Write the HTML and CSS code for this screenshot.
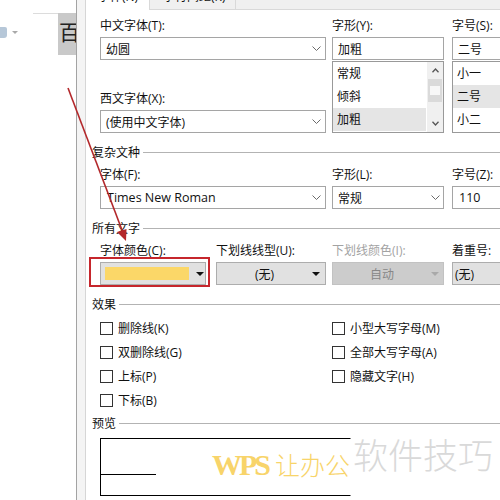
FILE: index.html
```html
<!DOCTYPE html>
<html lang="zh-CN">
<head>
<meta charset="utf-8">
<title>字体</title>
<link rel="stylesheet" href="styles.css">
</head>
<body>
<div class="screen">
  <div class="doc">
    <div class="doc-tools">
      <div class="doc-rule"></div>
      <div class="doc-icons"><span class="doc-icon"></span><span class="doc-caret"></span></div>
    </div>
    <div class="doc-sel">百</div>
  </div>
  <div class="dialog">
    <div class="dialog-edge"></div>
    <div class="panel">
      <div class="tabs">
        <div class="tab tab-on">字体(N)</div>
        <div class="tab">字符间距(R)</div>
      </div>
      <div class="content">
        <div class="row row-a">
          <div class="col c1">
            <div class="label">中文字体(T):</div>
            <div class="input combo"><span>幼圆</span><svg class="chev" width="9" height="5" viewBox="0 0 9 5"><path d="M0.5 0.5 L4.5 4.5 L8.5 0.5" fill="none" stroke="#6a6a6a"/></svg></div>
            <div class="label gap-l">西文字体(X):</div>
            <div class="input combo"><span>(使用中文字体)</span><svg class="chev" width="9" height="5" viewBox="0 0 9 5"><path d="M0.5 0.5 L4.5 4.5 L8.5 0.5" fill="none" stroke="#6a6a6a"/></svg></div>
          </div>
          <div class="col c2">
            <div class="label">字形(Y):</div>
            <div class="input">加粗</div>
            <div class="list">
              <div class="items">
                <div class="item">常规</div>
                <div class="item">倾斜</div>
                <div class="item sel">加粗</div>
              </div>
              <div class="scroll">
                <div class="sarrow"><svg width="7" height="5" viewBox="0 0 7 5"><path d="M0.5 4.2 L3.5 1 L6.5 4.2" fill="none" stroke="#555" stroke-width="1.3"/></svg></div>
                <div class="thumb"><span class="thumb-in"></span></div>
                <div class="sarrow down"><svg width="7" height="5" viewBox="0 0 7 5"><path d="M0.5 0.8 L3.5 4 L6.5 0.8" fill="none" stroke="#555" stroke-width="1.3"/></svg></div>
              </div>
            </div>
          </div>
          <div class="col c3">
            <div class="label">字号(S):</div>
            <div class="input">二号</div>
            <div class="list">
              <div class="items">
                <div class="item">小一</div>
                <div class="item sel">二号</div>
                <div class="item">小二</div>
              </div>
            </div>
          </div>
        </div>

        <div class="section">复杂文种</div>
        <div class="row row-b">
          <div class="col c1">
            <div class="label">字体(F):</div>
            <div class="input combo"><span class="latin">Times New Roman</span><svg class="chev" width="9" height="5" viewBox="0 0 9 5"><path d="M0.5 0.5 L4.5 4.5 L8.5 0.5" fill="none" stroke="#6a6a6a"/></svg></div>
          </div>
          <div class="col c2">
            <div class="label">字形(L):</div>
            <div class="input combo"><span>常规</span><svg class="chev" width="9" height="5" viewBox="0 0 9 5"><path d="M0.5 0.5 L4.5 4.5 L8.5 0.5" fill="none" stroke="#6a6a6a"/></svg></div>
          </div>
          <div class="col c3">
            <div class="label">字号(Z):</div>
            <div class="input"><span class="latin">110</span></div>
          </div>
        </div>

        <div class="section">所有文字</div>
        <div class="row row-c">
          <div class="col d1">
            <div class="label">字体颜色(C):</div>
            <div class="dd dd-color"><span class="swatch"></span><span class="tri"></span></div>
          </div>
          <div class="col d2">
            <div class="label">下划线线型(U):</div>
            <div class="dd"><span class="dd-text">(无)</span><span class="tri"></span></div>
          </div>
          <div class="col d3">
            <div class="label off">下划线颜色(I):</div>
            <div class="dd dd-off"><span class="dd-text">自动</span><span class="tri"></span></div>
          </div>
          <div class="col d4">
            <div class="label">着重号:</div>
            <div class="dd dd-left"><span class="dd-text">(无)</span></div>
          </div>
        </div>

        <div class="section">效果</div>
        <div class="checks">
          <div class="check-col">
            <div class="check"><span class="box"></span>删除线(K)</div>
            <div class="check"><span class="box"></span>双删除线(G)</div>
            <div class="check"><span class="box"></span>上标(P)</div>
            <div class="check"><span class="box"></span>下标(B)</div>
          </div>
          <div class="check-col">
            <div class="check"><span class="box"></span>小型大写字母(M)</div>
            <div class="check"><span class="box"></span>全部大写字母(A)</div>
            <div class="check"><span class="box"></span>隐藏文字(H)</div>
          </div>
        </div>

        <div class="section section-tight">预览</div>
        <div class="preview">
          <div class="pbox">
            <div class="base-mark"></div>
            <div class="ptext"><span class="p-latin">WPS</span><span class="p-cjk">让办公</span></div>
          </div>
          <div class="watermark">软件技巧</div>
        </div>
      </div>
    </div>
  </div>

  <div class="highlight"></div>
  <svg class="arrow" width="500" height="500" viewBox="0 0 500 500">
    <line x1="68" y1="88" x2="123.5" y2="234" stroke="#b3282b" stroke-width="1.6"/>
    <polygon points="126,241 117,232 126.5,229" fill="#b3282b"/>
  </svg>
</div>
</body>
</html>
```
FILE: styles.css
```css
* { box-sizing: border-box; }
html, body { margin: 0; padding: 0; }
body {
  width: 500px;
  height: 500px;
  overflow: hidden;
  background: #fff;
  font-family: "Open Sans", "Noto Sans CJK SC", sans-serif;
  font-size: 12px;
  color: #111;
}
.screen {
  position: relative;
  width: 500px;
  height: 500px;
  display: flex;
  overflow: hidden;
}

/* document behind the dialog */
.doc { width: 76px; flex: none; display: flex; align-items: flex-start; }
.doc-tools { width: 58px; flex: none; }
.doc-rule { margin: 13px 0 0 33px; border-top: 1px solid #dcdcdc; }
.doc-icons { display: flex; align-items: center; margin-top: 13px; height: 11px; }
.doc-icon { width: 7px; height: 11px; background: #b6c7d8; border-radius: 0 2px 3px 0; }
.doc-caret {
  margin-left: 5px;
  width: 0; height: 0;
  border-left: 3px solid transparent;
  border-right: 3px solid transparent;
  border-top: 3px solid #a9a9a9;
}
.doc-sel {
  width: 18px; height: 42px; flex: none;
  margin-top: 13px;
  background: #c9c9c9;
  font-family: "Noto Sans CJK SC", serif;
  font-size: 21px; line-height: 36px;
  color: #222;
  padding-left: 1px;
  overflow: hidden; white-space: nowrap;
}

/* dialog */
.dialog { flex: 1; display: flex; border-left: 1px solid #a3a3a3; min-width: 0; }
.dialog-edge { width: 9px; flex: none; background: #f4f4f4; border-right: 1px solid #d6d6d6; }
.panel { flex: 1; min-width: 0; background: #fff; overflow: hidden; }

.tabs {
  height: 10px;
  background: #f0f0f0;
  border-bottom: 1px solid #d9d9d9;
  display: flex;
  align-items: flex-end;
}
.tab {
  height: 20px; flex: none;
  line-height: 16px;
  padding: 0 0 4px 13px;
  width: 86px;
  border-right: 1px solid #d9d9d9;
  white-space: nowrap;
  overflow: hidden;
}
.tab-on { width: 64px; padding-left: 12px; background: #fff; height: 21px; margin-bottom: -1px; padding-bottom: 5px; }

.content { padding-left: 6px; }
.row { display: flex; padding-left: 8px; }
.col { flex: none; }
.c1 { width: 226px; margin-right: 6px; }
.c2 { width: 112px; margin-right: 8px; }
.c3 { width: 110px; }
.row-a { margin-top: 8px; }
.row-b, .row-c { margin-top: 7px; }

.label { height: 16px; line-height: 16px; white-space: nowrap; }
.label.off { color: #a3a3a3; }
.gap-l { margin-top: 31px; }

.input {
  height: 23px;
  margin-top: 3px;
  border: 1px solid #a5a5a5;
  padding: 0 4px 0 5px;
  display: flex;
  align-items: center;
  white-space: nowrap;
  background: #fff;
}
.combo .chev { margin-left: auto; flex: none; }
.c2 .combo { padding-right: 3px; }
.latin { font-size: 12.5px; padding-left: 1px; }

.list {
  margin-top: 1px;
  height: 72px;
  border: 1px solid #999;
  display: flex;
}
.items { flex: 1; }
.item { height: 23px; line-height: 23px; padding-left: 4px; white-space: nowrap; }
.item.sel { background: #e5e5e5; }
.scroll {
  width: 16px; flex: none;
  margin-left: 1px;
  background: #f0f0f0;
  display: flex; flex-direction: column;
}
.sarrow { height: 17px; display: flex; align-items: center; justify-content: center; }
.sarrow.down { margin-top: auto; }
.thumb {
  height: 23px; margin: 0 1px;
  background: #dadada;
  display: flex; align-items: center; justify-content: center;
}
.thumb-in { width: 10px; height: 9px; background: #f7f7f7; }

/* section headers */
.section {
  display: flex; align-items: center;
  height: 16px; margin-top: 11px;
  white-space: nowrap;
}
.section::after {
  content: "";
  flex: 1;
  margin-left: 3px;
  border-top: 1px solid #b3b3b3;
}
.section-tight { margin-top: 3px; }

/* drop-down buttons */
.d1 { width: 106px; margin-right: 10px; }
.d2 { width: 110px; margin-right: 6px; }
.d3 { width: 112px; margin-right: 8px; }
.d4 { width: 110px; }
.dd {
  height: 23px; margin-top: 3px;
  border: 1px solid #adadad;
  background: #e1e1e1;
  display: flex; align-items: center;
  padding-right: 5px;
}
.dd-text { flex: 1; text-align: center; white-space: nowrap; }
.dd-left .dd-text { text-align: left; padding-left: 2px; }
.tri {
  flex: none; width: 0; height: 0;
  border-left: 4px solid transparent;
  border-right: 4px solid transparent;
  border-top: 4px solid #111;
}
.dd-color { padding-left: 4px; padding-right: 1px; }
.swatch { width: 84px; height: 13px; background: #fbd768; flex: none; margin-right: auto; }
.dd-off { background: #cccccc; border-color: #c2c2c2; color: #878787; padding-right: 4px; }
.dd-off .tri { border-top-color: #a9a9a9; }

/* checkboxes */
.checks { display: flex; padding-left: 8px; margin-top: 4px; }
.check-col { width: 232px; flex: none; }
.check { height: 24px; display: flex; align-items: center; white-space: nowrap; }
.box { width: 13px; height: 13px; border: 1px solid #333; background: #fff; margin-right: 5px; flex: none; }

/* preview */
.preview { display: flex; align-items: flex-start; padding-left: 8px; margin-top: 7px; }
.pbox {
  width: 251px; height: 58px; flex: none;
  background: #fff;
  border-top: 1px solid #000;
  border-bottom: 1px solid #000;
  border-left: 1px solid #000;
  border-right: 1px solid #fff;
  display: flex; align-items: flex-start;
}
.base-mark { width: 55px; height: 36px; flex: none; border-bottom: 1px solid #000; }
.ptext {
  flex: 1;
  min-width: 0;
  overflow: hidden;
  padding: 0 0 0 56px;
  margin-top: 10px;
  white-space: nowrap;
  color: #f8d46a;
  line-height: 30px;
  height: 30px;
}
.p-latin {
  font-family: "Liberation Serif", serif;
  font-weight: bold;
  font-size: 30px;
  letter-spacing: -3px;
  margin-right: 7px;
}
.p-cjk {
  font-family: "Noto Sans CJK SC", sans-serif;
  font-weight: 300;
  font-size: 25px;
}
.watermark {
  margin: -2px 0 0 2px;
  font-family: "Noto Sans CJK SC", sans-serif;
  font-weight: 300;
  font-size: 35px;
  line-height: 35px;
  color: #d9d9d9;
  white-space: nowrap;
}

/* annotation overlays */
.highlight {
  position: absolute;
  left: 89px; top: 257px;
  width: 121px; height: 30px;
  border: 2px solid #c6262c;
}
.arrow { position: absolute; left: 0; top: 0; pointer-events: none; }
```
